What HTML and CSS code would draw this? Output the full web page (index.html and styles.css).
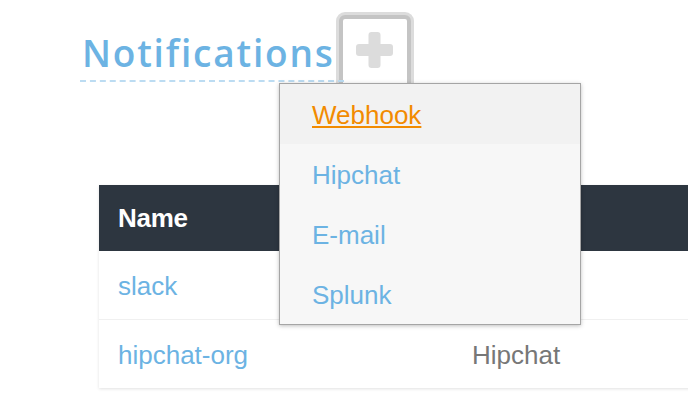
FILE: index.html
```html
<!DOCTYPE html>
<html>
<head>
<meta charset="utf-8">
<link rel="stylesheet" href="styles.css">
</head>
<body>
<div class="page">
  <div class="title-row">
    <h1 class="title">Notifications</h1>
    <div class="add-btn">
      <svg class="plus" width="37" height="36" viewBox="0 0 37 36">
        <rect x="12.5" y="0" width="12" height="36" rx="3" fill="#dcdcdc"/>
        <rect x="0" y="12" width="37" height="12" rx="3" fill="#dcdcdc"/>
      </svg>
    </div>
    <ul class="menu">
      <li class="menu-item active"><a>Webhook</a></li>
      <li class="menu-item"><a>Hipchat</a></li>
      <li class="menu-item"><a>E-mail</a></li>
      <li class="menu-item"><a>Splunk</a></li>
    </ul>
  </div>
  <table class="grid">
    <thead>
      <tr><th class="col-name">Name</th><th class="col-type"></th></tr>
    </thead>
    <tbody>
      <tr class="row"><td class="link">slack</td><td class="type"></td></tr>
      <tr class="row"><td class="link">hipchat-org</td><td class="type">Hipchat</td></tr>
    </tbody>
  </table>
</div>
</body>
</html>
```
FILE: styles.css
```css
html, body {
  margin: 0;
  padding: 0;
  background: #ffffff;
  overflow: hidden;
}
body {
  width: 688px;
  height: 414px;
  font-family: "Liberation Sans", Arial, sans-serif;
}
.page {
  position: relative;
}
.title-row {
  position: relative;
  display: flex;
  align-items: flex-start;
  padding: 12px 0 0 80px;
  height: 80px;
}
.title {
  position: relative;
  z-index: 2;
  margin: 22px 0 0 0;
  padding: 0 9px 9px 2px;
  font-family: "Open Sans", Lato, sans-serif;
  font-weight: 600;
  font-size: 37px;
  line-height: 37px;
  letter-spacing: 1.8px;
  color: #6cb3e3;
  border-bottom: 2px dashed #bcdcf2;
  white-space: nowrap;
}
.add-btn {
  position: relative;
  z-index: 1;
  margin: 3px 0 0 -5px;
  width: 64px;
  height: 80px;
  border: 4px solid #c4c4c4;
  border-radius: 6px;
  box-shadow: 0 0 0 3px #dcdcdc;
  background: #ffffff;
  display: flex;
  justify-content: center;
  padding-top: 13px;
  box-sizing: content-box;
}
.plus {
  display: block;
}
.menu {
  position: absolute;
  z-index: 5;
  left: 279px;
  top: 83px;
  width: 300px;
  margin: 0;
  padding: 0;
  list-style: none;
  background: #f7f7f7;
  border: 1px solid #a5a5a5;
  box-shadow: 0 1px 4px rgba(0, 0, 0, 0.25);
}
.menu-item {
  height: 58px;
  padding-top: 2px;
  line-height: 58px;
  padding-left: 32px;
  font-size: 26px;
  color: #6cb3e3;
}
.menu-item.active {
  background: #f2f2f2;
  color: #f28b00;
}
.menu-item.active a {
  text-decoration: underline;
}
.grid {
  margin: 93px 0 0 99px;
  width: 720px;
  border-collapse: collapse;
  box-shadow: 0 1px 3px rgba(0, 0, 0, 0.12);
  font-size: 26px;
}
.grid th {
  background: #2d3640;
  color: #ffffff;
  font-weight: 700;
  text-align: left;
  height: 66px;
  padding: 0 0 0 19px;
  line-height: 66px;
  letter-spacing: -0.3px;
}
.col-name {
  width: 335px;
}
.row td {
  height: 66px;
  padding: 2px 0 0 19px;
  line-height: 66px;
}
.row + .row td {
  border-top: 1px solid #f0f0f0;
}
.link {
  color: #6cb3e3;
}
.type {
  color: #777777;
}
```
